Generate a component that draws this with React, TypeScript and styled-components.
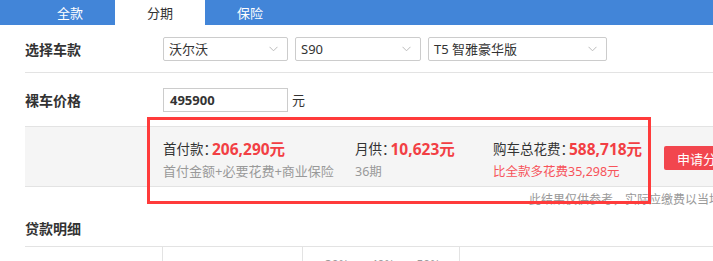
import React from "react";
import styled, { createGlobalStyle } from "styled-components";

const Global = createGlobalStyle`
  html, body { margin: 0; padding: 0; background: #fff; }
  body {
    width: 713px; height: 261px; overflow: hidden;
    font-family: "Noto Sans", "Noto Sans CJK SC", sans-serif;
    color: #333;
  }
  * { box-sizing: border-box; }
`;

const Page = styled.div`
  position: relative;
  width: 713px;
  height: 261px;
  overflow: hidden;
`;

const TabBar = styled.div`
  display: flex;
  height: 25px;
  padding-left: 25px;
  background: #4285d8;
`;

const Tab = styled.div<{ $active?: boolean }>`
  width: 90px;
  display: flex;
  align-items: center;
  justify-content: center;
  font-size: 13px;
  color: ${(p) => (p.$active ? "#333" : "#fff")};
  background: ${(p) => (p.$active ? "#fff" : "transparent")};
`;

const Body = styled.div`
  padding-left: 25px;
`;

const FormRow = styled.div<{ $h: number; $line?: boolean }>`
  display: flex;
  align-items: center;
  height: ${(p) => p.$h}px;
  border-bottom: ${(p) => (p.$line ? "1px solid #e3e3e3" : "none")};
`;

const Label = styled.div`
  width: 138px;
  font-size: 14px;
  font-weight: bold;
  color: #333;
`;

const Selects = styled.div`
  display: flex;
  gap: 7px;
`;

const Select = styled.div<{ $w: number }>`
  width: ${(p) => p.$w}px;
  height: 24px;
  border: 1px solid #ccc;
  border-radius: 2px;
  display: flex;
  align-items: center;
  justify-content: space-between;
  padding: 0 9px 0 5px;
  font-size: 13px;
  color: #333;
`;

const Input = styled.div`
  width: 125px;
  height: 24px;
  border: 1px solid #ccc;
  display: flex;
  align-items: center;
  padding-left: 6px;
  font-size: 13px;
  font-weight: bold;
  color: #333;
`;

const Unit = styled.span`
  margin-left: 4px;
  font-size: 13px;
  color: #333;
`;

const Band = styled.div`
  display: flex;
  align-items: flex-start;
  height: 61px;
  padding: 10px 0 0 138px;
  background: #f5f5f5;
  border-top: 1px solid #e3e3e3;
  border-bottom: 1px solid #e3e3e3;
`;

const Stat = styled.div<{ $w: number }>`
  width: ${(p) => p.$w}px;
  flex: none;
  display: flex;
  flex-direction: column;
`;

const StatMain = styled.div`
  height: 22px;
  display: flex;
  align-items: center;
  font-size: 13.5px;
  color: #333;
  white-space: nowrap;
`;

const Colon = styled.span`
  letter-spacing: -5px;
`;

const StatValue = styled.span`
  font-size: 15.5px;
  font-weight: bold;
  color: #f23f44;
`;

const StatSub = styled.div<{ $red?: boolean; $size?: number }>`
  height: 22px;
  display: flex;
  align-items: center;
  font-size: ${(p) => p.$size ?? 13}px;
  color: ${(p) => (p.$red ? "#f7535a" : "#999")};
  white-space: nowrap;
`;

const ApplyButton = styled.div`
  flex: none;
  height: 24px;
  margin-top: 9px;
  padding: 0 13px;
  display: flex;
  align-items: center;
  background: #f2464e;
  color: #fff;
  font-size: 13px;
  white-space: nowrap;
  border-radius: 2px;
`;

const Note = styled.div`
  height: 23px;
  display: flex;
  align-items: center;
  padding-left: 504px;
  font-size: 12px;
  color: #999;
  white-space: nowrap;
`;

const SectionTitle = styled.div`
  height: 36px;
  display: flex;
  align-items: center;
  font-size: 14px;
  font-weight: bold;
  color: #333;
`;

const Table = styled.div`
  display: grid;
  grid-template-columns: 137px 140px 157px 1fr;
  border-top: 1px solid #e3e3e3;
  height: 40px;
`;

const Cell = styled.div<{ $first?: boolean }>`
  border-left: ${(p) => (p.$first ? "none" : "1px solid #e3e3e3")};
  display: flex;
  gap: 22px;
  padding: 9px 0 0 22px;
  font-size: 12px;
  color: #999;
`;

const Highlight = styled.div`
  position: absolute;
  left: 147px;
  top: 117px;
  width: 504px;
  height: 87px;
  border: 3px solid #ff3b3b;
  pointer-events: none;
`;

const Chevron = () => (
  <svg width="9" height="6" viewBox="0 0 9 6" fill="none">
    <polyline points="0.5,0.8 4.5,4.8 8.5,0.8" stroke="#bbb" strokeWidth="1" />
  </svg>
);

export default function App() {
  return (
    <Page>
      <Global />
      <TabBar>
        <Tab>全款</Tab>
        <Tab $active>分期</Tab>
        <Tab>保险</Tab>
      </TabBar>
      <Body>
        <FormRow $h={48} $line>
          <Label>选择车款</Label>
          <Selects>
            <Select $w={125}>
              <span>沃尔沃</span>
              <Chevron />
            </Select>
            <Select $w={126}>
              <span>S90</span>
              <Chevron />
            </Select>
            <Select $w={179}>
              <span>T5 智雅豪华版</span>
              <Chevron />
            </Select>
          </Selects>
        </FormRow>
        <FormRow $h={53}>
          <Label>裸车价格</Label>
          <Input>495900</Input>
          <Unit>元</Unit>
        </FormRow>
        <Band>
          <Stat $w={192}>
            <StatMain>
              首付款<Colon>：</Colon>
              <StatValue>206,290元</StatValue>
            </StatMain>
            <StatSub>首付金额+必要花费+商业保险</StatSub>
          </Stat>
          <Stat $w={138}>
            <StatMain>
              月供<Colon>：</Colon>
              <StatValue>10,623元</StatValue>
            </StatMain>
            <StatSub $size={12.5}>36期</StatSub>
          </Stat>
          <Stat $w={171}>
            <StatMain>
              购车总花费<Colon>：</Colon>
              <StatValue>588,718元</StatValue>
            </StatMain>
            <StatSub $red $size={12.5}>比全款多花费35,298元</StatSub>
          </Stat>
          <ApplyButton>申请分期</ApplyButton>
        </Band>
        <Note>此结果仅供参考，实际应缴费以当地为准</Note>
        <SectionTitle>贷款明细</SectionTitle>
        <Table>
          <Cell $first />
          <Cell />
          <Cell>
            <span>30%</span>
            <span>40%</span>
            <span>50%</span>
          </Cell>
          <Cell />
        </Table>
      </Body>
      <Highlight />
    </Page>
  );
}
